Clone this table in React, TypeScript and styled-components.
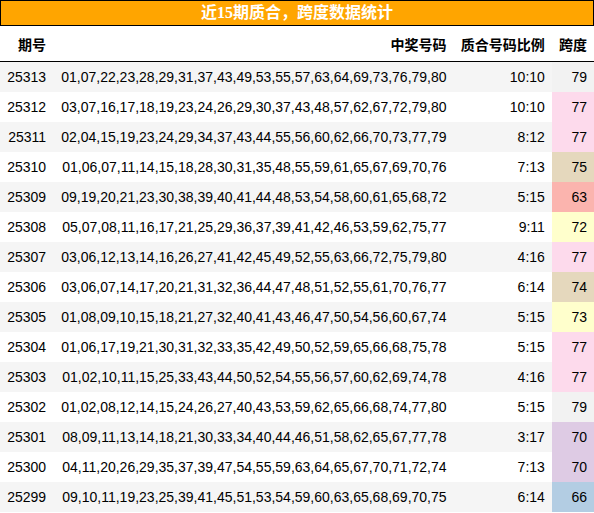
import React from 'react';
import styled, { createGlobalStyle } from 'styled-components';

const GlobalStyle = createGlobalStyle`
  html, body {
    margin: 0;
    padding: 0;
    background: #ffffff;
  }
  body {
    font-family: "Liberation Sans", "Noto Sans CJK SC", sans-serif;
    color: #000000;
  }
`;

const Wrapper = styled.div`
  width: 594px;
`;

const Title = styled.div`
  height: 24px;
  line-height: 24px;
  background: #ffa500;
  border: 1px solid #000000;
  color: #ffffff;
  font-family: "Liberation Serif", "Noto Sans CJK SC", serif;
  font-size: 16px;
  font-weight: bold;
  text-align: center;
`;

const Table = styled.table`
  width: 100%;
  border-collapse: collapse;
  border-spacing: 0;
  font-size: 14px;
  line-height: 16px;
`;

const HeadRow = styled.tr`
  border-bottom: 1px solid #000000;
`;

const HeadCell = styled.th`
  padding: 11px 7px 8px;
  text-align: right;
  font-weight: bold;
  white-space: nowrap;
  font-family: "Liberation Sans", "Noto Sans CJK SC", sans-serif;
`;

const Row = styled.tr<{ $striped: boolean }>`
  background: ${p => (p.$striped ? '#f5f5f5' : '#ffffff')};
`;

const Cell = styled.td`
  height: 16px;
  padding: 7px;
  text-align: right;
  white-space: nowrap;
`;

const SpanCell = styled(Cell)<{ $bg: string }>`
  background: ${p => p.$bg};
`;

type Draw = {
  issue: string;
  numbers: string;
  ratio: string;
  span: number;
};

const draws: Draw[] = [
  { issue: '25313', numbers: '01,07,22,23,28,29,31,37,43,49,53,55,57,63,64,69,73,76,79,80', ratio: '10:10', span: 79 },
  { issue: '25312', numbers: '03,07,16,17,18,19,23,24,26,29,30,37,43,48,57,62,67,72,79,80', ratio: '10:10', span: 77 },
  { issue: '25311', numbers: '02,04,15,19,23,24,29,34,37,43,44,55,56,60,62,66,70,73,77,79', ratio: '8:12', span: 77 },
  { issue: '25310', numbers: '01,06,07,11,14,15,18,28,30,31,35,48,55,59,61,65,67,69,70,76', ratio: '7:13', span: 75 },
  { issue: '25309', numbers: '09,19,20,21,23,30,38,39,40,41,44,48,53,54,58,60,61,65,68,72', ratio: '5:15', span: 63 },
  { issue: '25308', numbers: '05,07,08,11,16,17,21,25,29,36,37,39,41,42,46,53,59,62,75,77', ratio: '9:11', span: 72 },
  { issue: '25307', numbers: '03,06,12,13,14,16,26,27,41,42,45,49,52,55,63,66,72,75,79,80', ratio: '4:16', span: 77 },
  { issue: '25306', numbers: '03,06,07,14,17,20,21,31,32,36,44,47,48,51,52,55,61,70,76,77', ratio: '6:14', span: 74 },
  { issue: '25305', numbers: '01,08,09,10,15,18,21,27,32,40,41,43,46,47,50,54,56,60,67,74', ratio: '5:15', span: 73 },
  { issue: '25304', numbers: '01,06,17,19,21,30,31,32,33,35,42,49,50,52,59,65,66,68,75,78', ratio: '5:15', span: 77 },
  { issue: '25303', numbers: '01,02,10,11,15,25,33,43,44,50,52,54,55,56,57,60,62,69,74,78', ratio: '4:16', span: 77 },
  { issue: '25302', numbers: '01,02,08,12,14,15,24,26,27,40,43,53,59,62,65,66,68,74,77,80', ratio: '5:15', span: 79 },
  { issue: '25301', numbers: '08,09,11,13,14,18,21,30,33,34,40,44,46,51,58,62,65,67,77,78', ratio: '3:17', span: 70 },
  { issue: '25300', numbers: '04,11,20,26,29,35,37,39,47,54,55,59,63,64,65,67,70,71,72,74', ratio: '7:13', span: 70 },
  { issue: '25299', numbers: '09,10,11,19,23,25,39,41,45,51,53,54,59,60,63,65,68,69,70,75', ratio: '6:14', span: 66 },
];

// pastel colour scale for the span column
const spanColor = (span: number): string => {
  if (span >= 79) return '#f2f2f2';
  if (span >= 76) return '#fddaec';
  if (span >= 74) return '#e5d8bd';
  if (span >= 72) return '#ffffcc';
  if (span >= 68) return '#decbe4';
  if (span >= 65) return '#b3cde3';
  return '#fbb4ae';
};

const App: React.FC = () => {
  return (
    <>
      <GlobalStyle />
      <Wrapper>
        <Title>近15期质合，跨度数据统计</Title>
        <Table>
          <thead>
            <HeadRow>
              <HeadCell>期号</HeadCell>
              <HeadCell>中奖号码</HeadCell>
              <HeadCell>质合号码比例</HeadCell>
              <HeadCell>跨度</HeadCell>
            </HeadRow>
          </thead>
          <tbody>
            {draws.map((d, i) => (
              <Row key={d.issue} $striped={i % 2 === 0}>
                <Cell>{d.issue}</Cell>
                <Cell>{d.numbers}</Cell>
                <Cell>{d.ratio}</Cell>
                <SpanCell $bg={spanColor(d.span)}>{d.span}</SpanCell>
              </Row>
            ))}
          </tbody>
        </Table>
      </Wrapper>
    </>
  );
};

export default App;
